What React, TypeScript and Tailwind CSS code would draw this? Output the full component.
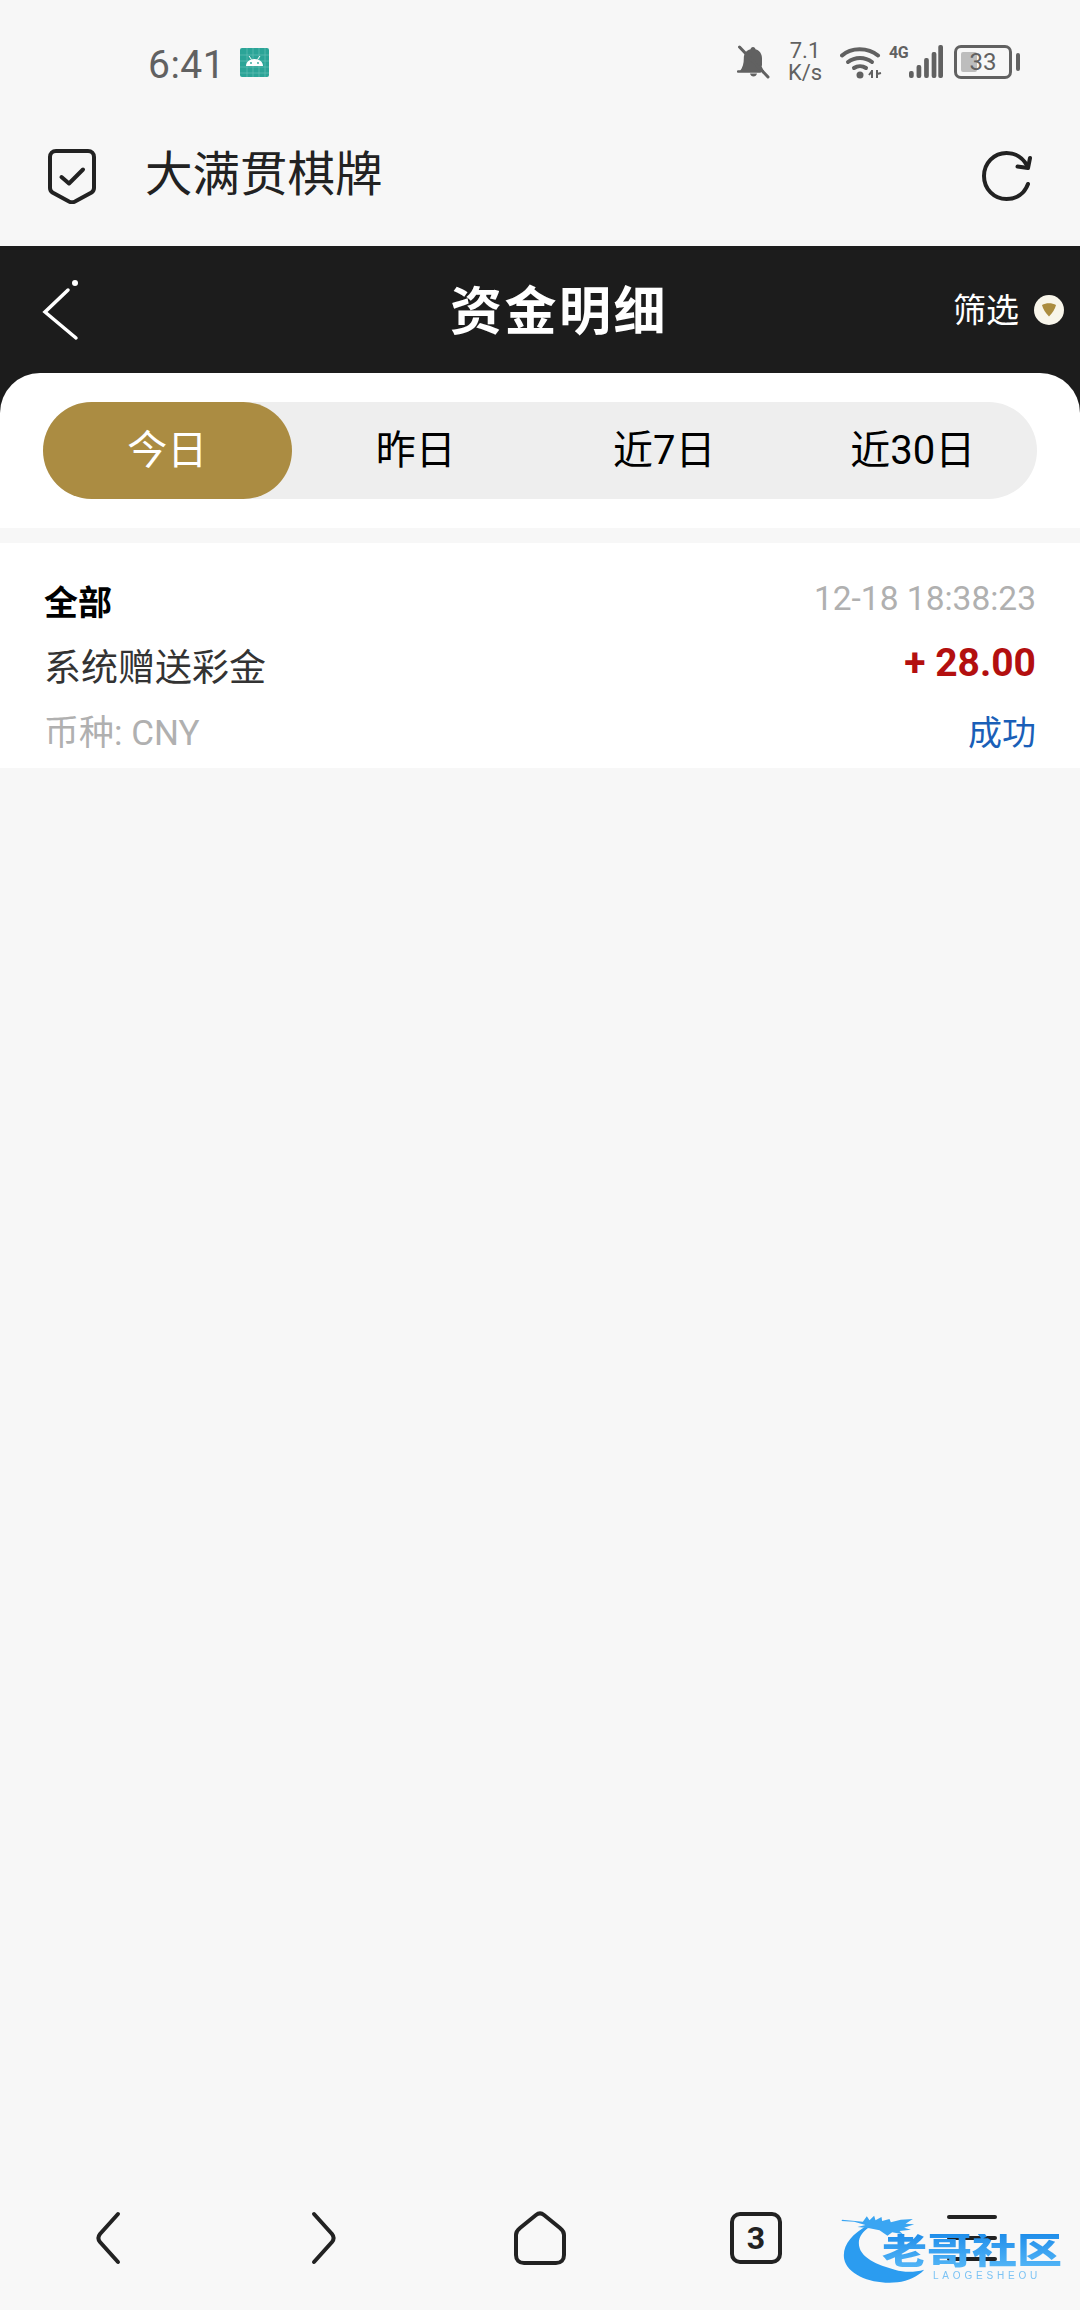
const FONT = "font-['Roboto','Noto_Sans_CJK_SC',sans-serif]";

const TABS = ["今日", "昨日", "近7日", "近30日"];

function StatusIcons() {
  return (
    <div className="flex items-center text-[#616161]">
      <svg width="34" height="36" viewBox="0 0 34 36" className="mr-[14px]">
        <path d="M16 3c-1.400 0-2.400 1-2.500 2.300C9 6.500 6.800 10 6.800 14.500c0 5-1 9-3.800 12.500h24c-1.800-2.500-2.800-5-3.200-9L9 6.500 25 22V14.500c0-4.500-2.300-8-6.500-9.200C18.400 4 17.400 3 16 3Z" fill="#616161" />
        <path d="M13 29.500h7c-.4 2-1.800 3-3.500 3s-3.100-1-3.500-3Z" fill="#616161" />
        <path d="M2.500 3 31 33" stroke="#616161" strokeWidth="3" strokeLinecap="round" />
        <path d="M1 27.500h22" stroke="#616161" strokeWidth="2.500" strokeLinecap="round" />
      </svg>
      <div className="mr-[15px] flex w-[40px] flex-col items-center text-[22px] leading-[22px]">
        <span>7.1</span>
        <span>K/s</span>
      </div>
      <svg width="42" height="36" viewBox="0 0 42 36" className="mr-[7px]">
        <path d="M2 11.500C11 3 28 3 38 11.500" fill="none" stroke="#616161" strokeWidth="4" strokeLinecap="round" />
        <path d="M8 18c7-5.500 17-5.500 24 0" fill="none" stroke="#616161" strokeWidth="4" strokeLinecap="round" />
        <path d="M14 24c3.500-2.500 8.500-2.500 12 0" fill="none" stroke="#616161" strokeWidth="4" strokeLinecap="round" />
        <circle cx="20" cy="31" r="3.500" fill="#616161" />
        <path d="M32 26v8M29 31l3-4M37 26v8M37 30l4-1" fill="none" stroke="#616161" strokeWidth="2" />
      </svg>
      <div className="mr-[11px] flex h-[36px] items-start">
        <span className="mr-[1px] w-[19px] text-[16px] leading-[18px] font-bold tracking-[-0.5px] [font-family:'Liberation_Sans_Narrow','Roboto',sans-serif]">4G</span>
        <svg width="34" height="34" viewBox="0 0 36 34" preserveAspectRatio="none" className="mt-[1px]">
          <rect x="0" y="26" width="5" height="7" rx="2" fill="#616161" />
          <rect x="8" y="20" width="5" height="13" rx="2" fill="#616161" />
          <rect x="16" y="13" width="5" height="20" rx="2" fill="#616161" />
          <rect x="24" y="7" width="5" height="26" rx="2" fill="#616161" />
          <rect x="31" y="0" width="5" height="33" rx="2" fill="#616161" />
        </svg>
      </div>
      <div className="relative flex h-[34px] w-[58px] items-center justify-center rounded-[7px] border-[3px] border-[#616161] text-[24px] leading-none">
        <div className="absolute top-[4px] bottom-[4px] left-[4px] w-[16px] rounded-[2px] bg-[#bdbdbd]" />
        <span className="relative">33</span>
      </div>
      <div className="ml-[4px] h-[18px] w-[4px] rounded-full bg-[#616161]" />
    </div>
  );
}

function AndroidBadge() {
  return (
    <svg width="29" height="29" viewBox="0 0 29 29" className="ml-[15px]">
      <rect width="29" height="29" rx="2" fill="#2ba497" />
      <path d="M0 7h29M0 13h29M0 19h29M0 25h29M7 0v29M13 0v29M19 0v29M25 0v29" stroke="#6cc4ba" strokeWidth="0.6" />
      <path d="M6 18c0-4 3.500-7 8.500-7s8.500 3 8.500 7Z" fill="#fff" />
      <path d="M9 8l2.500 3.500M20 8l-2.500 3.500" stroke="#fff" strokeWidth="1" />
      <circle cx="11" cy="15" r="0.9" fill="#2ba497" />
      <circle cx="18" cy="15" r="0.9" fill="#2ba497" />
    </svg>
  );
}

function Watermark() {
  return (
    <div className="pointer-events-none absolute right-[13px] bottom-[26px] h-[70px] w-[227px] blur-[0.6px]">
      <svg width="227" height="70" viewBox="450 100 680 210" className="absolute inset-0">
        <path d="M530 135C485 160 455 195 462 235c10 50 90 78 160 70 32-4 62-18 80-38-30 8-60 8-88 0-50-14-108-35-108-80 0-20 14-36 32-48Z" fill="#2b9cf0" />
        <path d="M456 117l62 6 12-16 8 12 14-14 4 14 18-10 2 12 22-6 4 10 30-8 36-2-22 14 26 2-30 10 20 6-34 4 10 10-32-6-14 10-24-16-30-6-36-4 24-6-34-10-38-2Z" fill="#3aa5f2" />
      </svg>
      <span className="absolute top-[20px] left-[42px] origin-left scale-x-[1.25] bg-gradient-to-b from-[#1f8eea] to-[#55b8f7] bg-clip-text text-[36px] leading-[36px] font-black whitespace-nowrap text-transparent">老哥社区</span>
      <span className="absolute top-[57px] left-[93px] text-[10px] leading-[10px] tracking-[3.800px] whitespace-nowrap text-[#7cc3f4] [font-family:'Liberation_Sans',sans-serif]">LAOGESHEOU</span>
    </div>
  );
}

export default function App() {
  return (
    <div className={`${FONT} relative flex h-[2310px] w-[1080px] flex-col overflow-hidden bg-[#f7f7f7]`}>
      {/* status bar */}
      <div className="flex h-[110px] items-center justify-between pt-[14px] pr-[60px] pl-[148px]">
        <div className="flex items-center">
          <span className="mt-[6px] text-[39px] leading-none tracking-[0.5px] text-[#616161]">6:41</span>
          <AndroidBadge />
        </div>
        <StatusIcons />
      </div>

      {/* browser bar */}
      <div className="flex h-[136px] items-center justify-between pr-[47px] pb-[5px] pl-[47px]">
        <div className="flex items-center">
          <svg width="50" height="56" viewBox="0 0 50 56">
            <path d="M9 3h32c3.500 0 6 2.500 6 6v31c0 2-1 3.500-2.500 4.500L28 53.500c-2 1-4 1-6 0L5.500 44.500C4 43.500 3 42 3 40V9c0-3.500 2.500-6 6-6Z" fill="none" stroke="#222" strokeWidth="4" />
            <path d="M14.500 29l7.500 6.500L36 21.500" fill="none" stroke="#222" strokeWidth="4" strokeLinecap="round" strokeLinejoin="round" />
          </svg>
          <span className="ml-[48px] text-[47.500px] leading-none text-[#222]">大满贯棋牌</span>
        </div>
        <svg width="52" height="52" viewBox="0 0 52 52">
          <path d="M47 34c-3.500 9.500-11.500 15-21.500 15C13 49 3 39 3 26S13 3 25.500 3c9 0 16 4.500 20.500 12.500" fill="none" stroke="#222" strokeWidth="4" strokeLinecap="round" />
          <path d="M49 8l-2 10-10.500-1.500" fill="none" stroke="#222" strokeWidth="4" strokeLinecap="round" strokeLinejoin="round" />
        </svg>
      </div>

      {/* page header + tabs */}
      <div className="bg-[#1c1c1c]">
        <div className="flex h-[127px] items-center pr-[16px] pl-[42px]">
          <div className="flex-1">
            <svg width="38" height="62" viewBox="0 0 38 62">
              <path d="M26 11 3 33l31 26" fill="none" stroke="#fff" strokeWidth="3.500" strokeLinecap="round" strokeLinejoin="miter" />
              <circle cx="33" cy="4" r="3" fill="#fff" />
            </svg>
          </div>
          <span className="mt-[6px] ml-[12px] text-[52px] leading-none font-bold tracking-[2.500px] text-white">资金明细</span>
          <div className="flex flex-1 items-center justify-end">
            <span className="mt-[2px] text-[33px] leading-none text-white">筛选</span>
            <span className="ml-[15px] flex h-[30px] w-[30px] items-center justify-center rounded-full bg-[#f8f5ea]">
              <svg width="16" height="15" viewBox="0 0 16 15">
                <path d="M1 3c4-2.500 10-2.500 14 0-1 4-3.500 8-7 11.500C4.500 11 2 7 1 3Z" fill="#ab8c3f" />
              </svg>
            </span>
          </div>
        </div>

        <div className="rounded-t-[40px] bg-white px-[43px] py-[29px]">
          <div className="flex h-[97px] rounded-full bg-[#eeeeee]">
            {TABS.map((tab, i) => (
              <div
                key={tab}
                className={`flex flex-1 items-center justify-center rounded-full text-[40px] leading-none ${
                  i === 0 ? "bg-[#ab8c42] text-white" : "text-black"
                }`}
              >
                {tab}
              </div>
            ))}
          </div>
        </div>
      </div>

      {/* record */}
      <div className="mt-[15px] flex h-[225px] flex-col bg-white px-[44px] pt-[36px]">
        <div className="flex h-[50px] items-center justify-between">
          <span className="mb-[3px] text-[34px] leading-none font-bold text-black">全部</span>
          <span className="mb-[11px] text-[33.500px] leading-none text-[#b0b0b0]">12-18 18:38:23</span>
        </div>
        <div className="mt-[14px] flex h-[50px] items-center justify-between">
          <span className="text-[37px] leading-none text-[#333]">系统赠送彩金</span>
          <span className="mb-[9px] text-[39px] leading-none font-bold text-[#b30f0f]">+ 28.00</span>
        </div>
        <div className="mt-[15px] flex h-[50px] items-center justify-between">
          <span className="text-[35px] leading-none text-[#b0b0b0]">币种: CNY</span>
          <span className="text-[34px] leading-none text-[#1a5fb8]">成功</span>
        </div>
      </div>

      {/* browser nav */}
      <div className="mt-auto grid h-[120px] grid-cols-5 justify-items-center bg-[#f8f8f8] pt-[20px]">
        <svg width="28" height="56" viewBox="0 0 28 56">
          <path d="M24 4 6 24c-2 2.500-2 5.500 0 8l18 20" fill="none" stroke="#222" strokeWidth="4" strokeLinecap="round" />
        </svg>
        <svg width="28" height="56" viewBox="0 0 28 56">
          <path d="M4 4l18 20c2 2.500 2 5.500 0 8L4 52" fill="none" stroke="#222" strokeWidth="4" strokeLinecap="round" />
        </svg>
        <svg width="54" height="56" viewBox="0 0 54 56">
          <path d="M23 5 7 18c-2.500 2-4 4-4 7v20c0 5 3 8 8 8h32c5 0 8-3 8-8V25c0-3-1.500-5-4-7L31 5c-2.500-2-5.500-2-8 0Z" fill="none" stroke="#222" strokeWidth="4" strokeLinejoin="round" />
        </svg>
        <div className="mt-[2px] flex h-[52px] w-[52px] items-center justify-center rounded-[10px] border-[4px] border-[#222] text-[32px] leading-none font-bold text-[#222]">3</div>
        <div className="mt-[5px] flex h-[46px] w-[50px] flex-col justify-between">
          <div className="h-[4px] rounded-full bg-[#222]" />
          <div className="h-[4px] rounded-full bg-[#222]" />
          <div className="h-[4px] rounded-full bg-[#222]" />
        </div>
      </div>

      <Watermark />
    </div>
  );
}
